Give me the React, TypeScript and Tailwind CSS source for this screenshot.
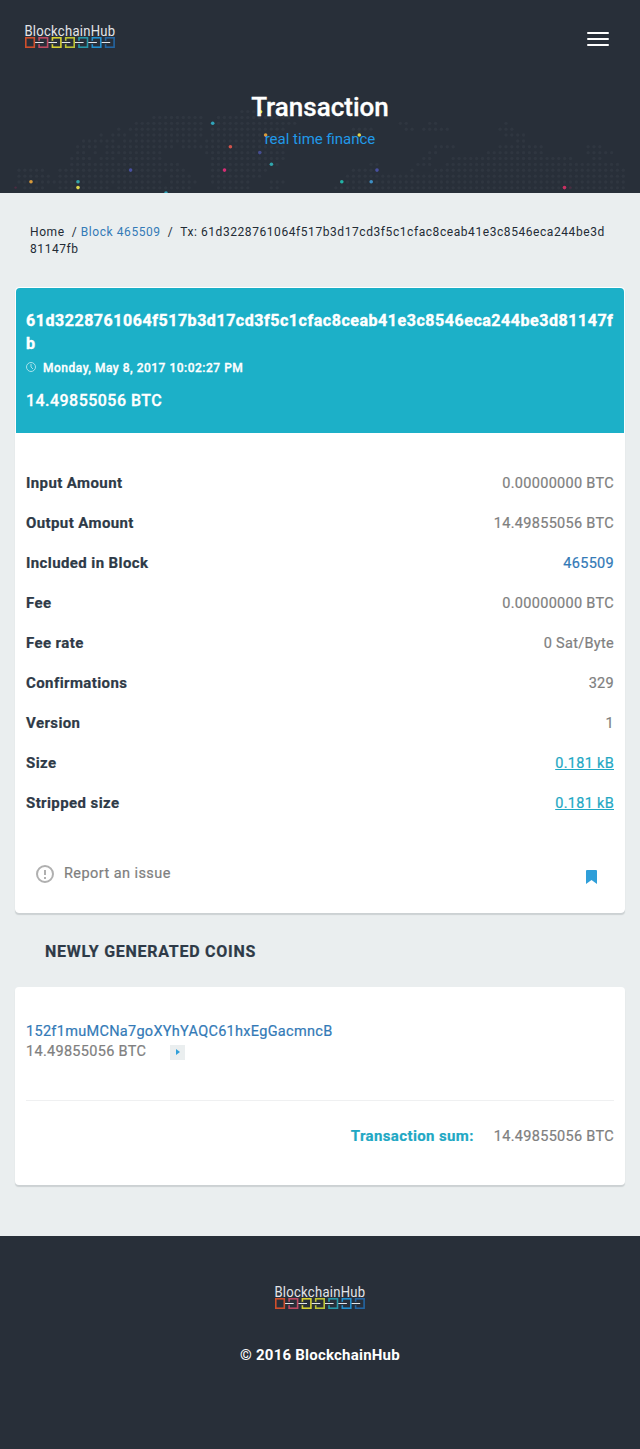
import React from "react";

type Run = [number, number];

const STEP = 5.867;

// Runs of dots for each row of the world map, as [first column, last column].
const mapRows: Run[][] = [
  [[38, 41]],
  [[23, 31], [34, 46]],
  [[20, 31], [33, 47], [65, 66], [70, 71], [83, 83]],
  [[17, 17], [19, 31], [33, 45], [57, 60], [66, 67], [69, 73], [82, 84]],
  [[14, 14], [16, 18], [20, 31], [33, 44], [57, 58], [83, 86]],
  [[11, 16], [18, 30], [32, 44], [85, 86]],
  [[10, 13], [15, 26], [28, 45], [71, 74], [82, 89], [97, 99]],
  [[10, 11], [13, 13], [15, 24], [32, 45], [70, 71], [80, 89], [97, 101]],
  [[9, 12], [14, 16], [18, 24], [33, 45], [69, 70], [74, 94], [98, 99]],
  [[9, 20], [21, 27], [33, 44], [60, 61], [68, 70], [73, 102]],
  [[0, 4], [7, 20], [21, 28], [33, 42], [57, 61], [67, 67], [71, 103]],
  [[0, 5], [7, 24], [26, 29], [33, 41], [56, 103]],
  [[0, 24], [26, 30], [33, 39], [43, 45], [55, 103]],
  [[1, 4], [7, 9], [11, 15], [17, 29], [34, 39], [43, 44], [54, 103]],
];

const brightDots: [number, number, string][] = [
  [31, 181.7, "#d99a3a"],
  [78, 181.7, "#35a5a8"],
  [78, 187.6, "#dcd64e"],
  [130.6, 170.1, "#4850a0"],
  [212.7, 123.3, "#30a4ba"],
  [230.4, 146.7, "#d0534b"],
  [224.5, 170.1, "#d52d74"],
  [260.6, 111.7, "#e0dc40"],
  [265.6, 135, "#d99a3a"],
  [259.8, 152.6, "#454d90"],
  [271.4, 164.3, "#30a6ac"],
  [166, 193, "#30a4ba"],
  [359.3, 135, "#e0d44c"],
  [377, 170.1, "#4850a0"],
  [341.8, 181.7, "#22b3a6"],
  [371.2, 181.7, "#3d8fc4"],
  [564.5, 187.6, "#c93062"],
];

const faintDots: [number, number][] = [[15.6, 187.6], [570.3, 187.6]];

function WorldMap() {
  return (
    <svg className="absolute inset-0" width="640" height="193" aria-hidden="true">
      <g fill="#2f3640">
        {mapRows.flatMap((runs, r) =>
          runs.flatMap(([a, b]) =>
            Array.from({ length: b - a + 1 }, (_, i) => (
              <circle key={`${r}-${a + i}`} cx={19 + (a + i) * STEP} cy={111.6 + r * STEP} r={1.7} />
            )),
          ),
        )}
      </g>
      {faintDots.map(([x, y]) => (
        <circle key={x} cx={x} cy={y} r={1.2} fill="#4c2c42" />
      ))}
      {brightDots.map(([x, y, c]) => (
        <circle key={`${x}-${y}`} cx={x} cy={y} r={1.8} fill={c} />
      ))}
    </svg>
  );
}

const links = ["#cf4f2c", "#bd4a62", "#d6d032", "#bcc235", "#2797a8", "#2190d0", "#2365a2"];

function Logo() {
  return (
    <svg className="block overflow-visible" width="92" height="26" viewBox="0 0 92 26" role="img" aria-label="BlockchainHub">
      <text
        x="-0.6"
        y="11.6"
        textLength="91"
        lengthAdjust="spacingAndGlyphs"
        fill="#e4e6e9"
        fontSize="14"
        fontWeight="400"
        fontFamily="Roboto, sans-serif"
      >
        BlockchainHub
      </text>
      {links.map((c, i) => (
        <rect key={c} x={0.8 + i * 13.3} y="13.8" width="8.5" height="9.4" fill="none" stroke={c} strokeWidth="1.6" />
      ))}
      {links.slice(1).map((c, i) => (
        <g key={c}>
          <path d={`M${14.1 + i * 13.3} 16.8v3.4`} stroke="#282f39" strokeWidth="2.2" />
          <path d={`M${10.1 + i * 13.3} 18.5h8.6`} stroke="#e3e5e8" strokeWidth="1" />
        </g>
      ))}
    </svg>
  );
}

const details: { label: string; value: string; kind?: "link" | "size" }[] = [
  { label: "Input Amount", value: "0.00000000 BTC" },
  { label: "Output Amount", value: "14.49855056 BTC" },
  { label: "Included in Block", value: "465509", kind: "link" },
  { label: "Fee", value: "0.00000000 BTC" },
  { label: "Fee rate", value: "0 Sat/Byte" },
  { label: "Confirmations", value: "329" },
  { label: "Version", value: "1" },
  { label: "Size", value: "0.181 kB", kind: "size" },
  { label: "Stripped size", value: "0.181 kB", kind: "size" },
];

function valueClass(kind?: "link" | "size") {
  if (kind === "link") return "pt-[2px] text-[#337ab7]";
  if (kind === "size") return "pt-[2px] text-[#1fa8c4] underline";
  return "pt-[2px] text-[#808080]";
}

export default function App() {
  return (
    <div className="min-h-[1449px] w-[640px] bg-[#eaeeef] font-[Roboto,sans-serif] text-[14.5px] leading-[20px] tracking-[0.3px] [-webkit-text-stroke:0.2px_currentColor]">
      <header className="relative h-[193px] overflow-hidden bg-[#282f39]">
        <WorldMap />
        <div className="relative flex items-start justify-between pt-[24px] pr-[31px] pl-[25px] [-webkit-text-stroke:0px]">
          <Logo />
          <button aria-label="Menu" className="mt-[8px] flex w-[22px] flex-col gap-[4px]">
            <span className="h-[2px] rounded-full bg-white" />
            <span className="h-[2px] rounded-full bg-white" />
            <span className="h-[2px] rounded-full bg-white" />
          </button>
        </div>
        <div className="relative mt-[42px] text-center">
          <h1 className="text-[26px] leading-[30px] font-medium tracking-normal text-white [-webkit-text-stroke:0.3px_#fff]">
            Transaction
          </h1>
          <p className="mt-[7px] text-[15px] leading-[20px] tracking-normal text-[#2199e8] [-webkit-text-stroke:0px]">
            real time finance
          </p>
        </div>
      </header>

      <nav className="h-[94px] px-[30px] pt-[31px] text-[12px] leading-[17px] tracking-[0.57px] whitespace-pre text-[#222b35] [-webkit-text-stroke:0px]">
        <div>
          Home{"  "}/ <a className="text-[#337ab7]">Block 465509</a>
          {"  "}/{"  "}Tx: 61d3228761064f517b3d17cd3f5c1cfac8ceab41e3c8546eca244be3d
        </div>
        <div>81147fb</div>
      </nav>

      <main className="px-[15px]">
        <section className="h-[626px] rounded-[4px] border border-white bg-white shadow-[0_2px_1px_#ccd1d3]">
          <div className="h-[145px] rounded-t-[4px] bg-[#1cb0c8] px-[10px] pt-[21px] text-white">
            <h2 className="text-[16px] leading-[23px] font-bold tracking-[0.54px] whitespace-pre [-webkit-text-stroke:0.4px_#fff]">
              {"61d3228761064f517b3d17cd3f5c1cfac8ceab41e3c8546eca244be3d81147f\nb"}
            </h2>
            <div className="mt-[2px] flex h-[20px] items-center gap-[7px]">
              <svg width="10" height="10" viewBox="0 0 10 10" fill="none" stroke="#b8e6ee" strokeWidth="0.9">
                <circle cx="5" cy="5" r="4.5" />
                <path d="M5 2v3l2 2" />
              </svg>
              <span className="pt-px text-[12px] font-medium tracking-[0.5px] [-webkit-text-stroke:0.3px_#fff]">
                Monday, May 8, 2017 10:02:27 PM
              </span>
            </div>
            <p className="mt-[14px] text-[16px] leading-[20px] font-medium tracking-[0.46px] [-webkit-text-stroke:0.3px_#fff]">
              14.49855056 BTC
            </p>
          </div>
          <dl className="px-[10px] pt-[30px]">
            {details.map((d) => (
              <div key={d.label} className="flex h-[40px] items-center justify-between">
                <dt className="text-[15px] font-bold tracking-[0.4px] text-[#2e3a47]">{d.label}</dt>
                <dd className={valueClass(d.kind)}>{d.value}</dd>
              </div>
            ))}
          </dl>
          <div className="flex items-center justify-between pt-[40px] pr-[27px] pl-[20px]">
            <div className="flex items-center gap-[10px]">
              <svg width="18" height="18" viewBox="0 0 18 18" fill="none" stroke="#b0b0b0" strokeWidth="2">
                <circle cx="9" cy="9" r="8" />
                <path d="M9 5v5M9 12v2" />
              </svg>
              <span className="tracking-[0.43px] text-[#808080]">Report an issue</span>
            </div>
            <svg className="mt-[7px]" width="11" height="14" viewBox="0 0 11 14" fill="#2f9fd9">
              <path d="M0 1Q0 0 1 0h9q1 0 1 1v13L5.5 10 0 14Z" />
            </svg>
          </div>
        </section>

        <h3 className="h-[74px] pt-[29px] pl-[30px] text-[16px] leading-[20px] font-bold tracking-[0.74px] text-[#2e3a47]">
          NEWLY GENERATED COINS
        </h3>

        <section className="h-[198px] rounded-[4px] bg-white px-[11px] pt-[35px] shadow-[0_2px_1px_#ccd1d3]">
          <a className="block text-[#337ab7]">152f1muMCNa7goXYhYAQC61hxEgGacmncB</a>
          <div className="flex items-center">
            <span className="w-[144px] text-[#808080]">14.49855056 BTC</span>
            <span className="flex h-[15px] w-[15px] items-center justify-center bg-[#eaeeef]">
              <svg width="4" height="6" viewBox="0 0 4 6" fill="#2f9fd9">
                <path d="M0 0l4 3-4 3Z" />
              </svg>
            </span>
          </div>
          <div className="mt-[38px] flex justify-end gap-[20px] border-t border-[#eff0f1] pt-[25px]">
            <span className="text-[15px] font-bold tracking-[0.38px] text-[#1fa8c4]">Transaction sum:</span>
            <span className="pt-px text-[#808080]">14.49855056 BTC</span>
          </div>
        </section>
      </main>

      <footer className="mt-[51px] flex h-[213px] flex-col items-center bg-[#282f39] pt-[49px]">
        <div className="pl-[1px] [-webkit-text-stroke:0px]">
          <Logo />
        </div>
        <p className="mt-[34px] text-[15px] font-bold tracking-[0.22px] text-white [-webkit-text-stroke:0px]">© 2016 BlockchainHub</p>
      </footer>
    </div>
  );
}
